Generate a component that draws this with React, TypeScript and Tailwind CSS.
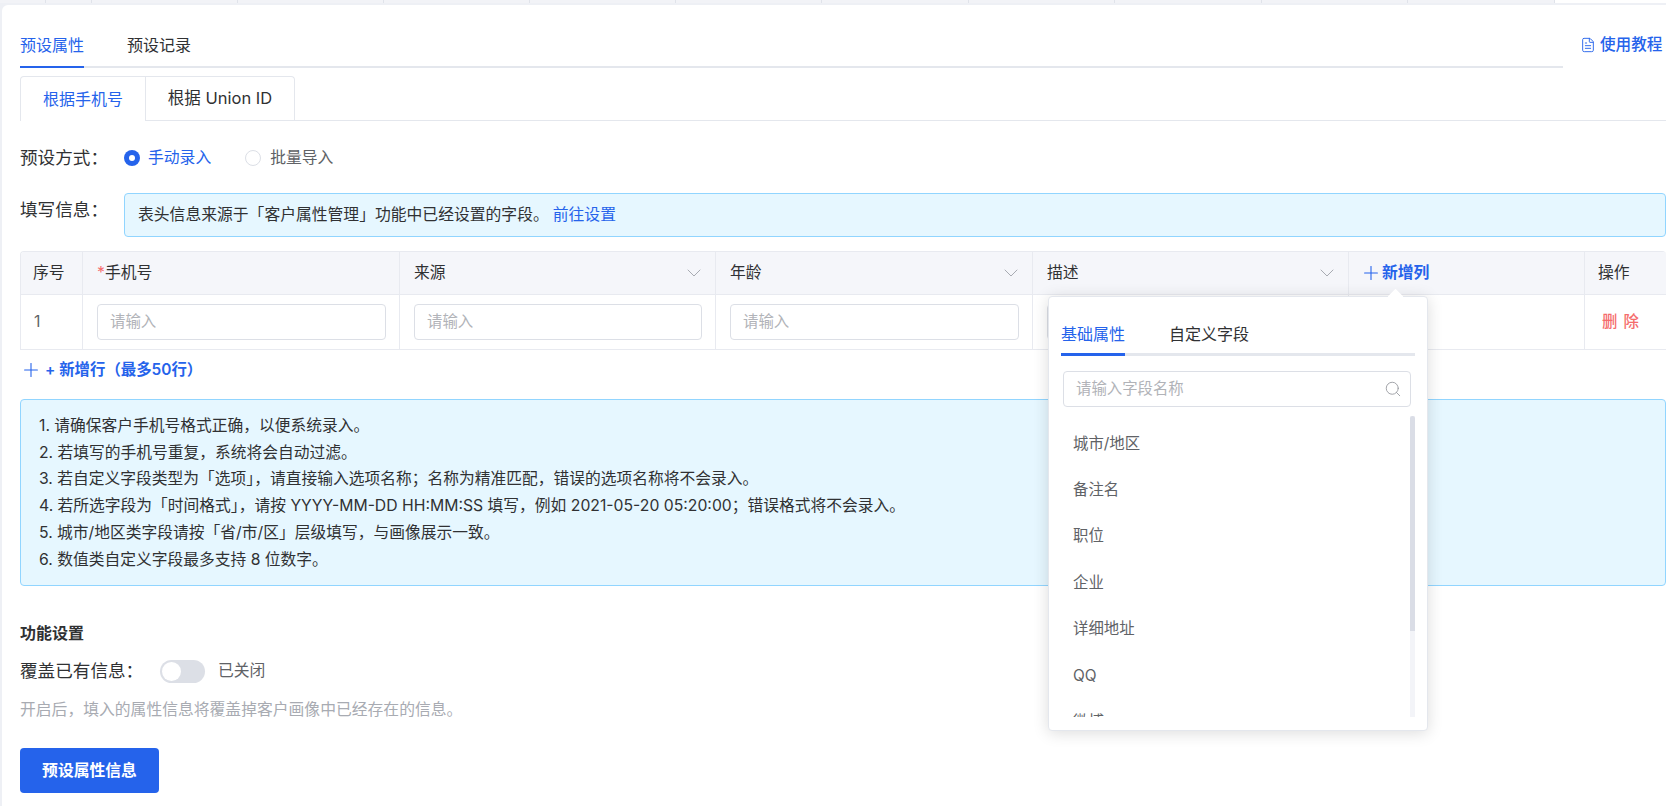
import { ChevronDown, FileText, Plus, Search } from "lucide-react"

const stripWidths = [46, 46, 146, 146, 146, 146, 146, 147, 146, 147, 146, 147]
const columns = ["来源", "年龄", "描述"]
const fields = ["城市/地区", "备注名", "职位", "企业", "详细地址", "QQ", "微博"]
const tips = [
  "1. 请确保客户手机号格式正确，以便系统录入。",
  "2. 若填写的手机号重复，系统将会自动过滤。",
  "3. 若自定义字段类型为「选项」，请直接输入选项名称；名称为精准匹配，错误的选项名称将不会录入。",
  "4. 若所选字段为「时间格式」，请按 YYYY-MM-DD HH:MM:SS 填写，例如 2021-05-20 05:20:00；错误格式将不会录入。",
  "5. 城市/地区类字段请按「省/市/区」层级填写，与画像展示一致。",
  "6. 数值类自定义字段最多支持 8 位数字。",
]

const FieldInput = ({ placeholder = "请输入" }: { placeholder?: string }) => (
  <div className="ml-[14px] mr-[13px] flex h-[36px] flex-1 items-center rounded-[4px] border border-[#dcdfe6] bg-white px-3 text-[15.4px] text-[#b1b3b8]">
    {placeholder}
  </div>
)

const FieldPopover = () => (
  <div className="absolute left-[1028px] top-[45px] z-10 h-[435px] w-[380px] rounded-[4px] border border-[#e4e7ed] bg-white px-3 shadow-[0_2px_16px_rgba(0,0,0,0.14)]">
    <div className="absolute left-[341px] top-[-6px] h-[11px] w-[11px] rotate-45 bg-white" />
    <div className="mt-[25px] flex h-[31px] gap-[44px] text-base text-[#303133]">
      <span className="text-[#2563eb]">基础属性</span>
      <span>自定义字段</span>
    </div>
    <div className="h-[3px] w-[354px] bg-[#e4e7ed]">
      <div className="h-[3px] w-[64px] bg-[#2563eb]" />
    </div>
    <div className="ml-[2px] mt-[15px] flex h-[36px] w-[348px] items-center justify-between rounded-[4px] border border-[#dcdfe6] pl-3 pr-[8px] text-[15.4px] text-[#b1b3b8]">
      请输入字段名称
      <Search size={18} strokeWidth={1.1} className="text-[#909399]" />
    </div>
    <div className="relative mt-[9px] h-[301px] overflow-hidden">
      <div className="pl-[12px] pt-[4px] text-[15.4px] text-[#606266]">
        {fields.map((item) => (
          <div key={item} className="flex h-[46.4px] items-center">
            {item}
          </div>
        ))}
      </div>
      <div className="absolute right-0 top-0 h-full w-[5px] bg-[#f3f4f8]">
        <div className="h-[215px] rounded-t-[3px] bg-[#dadde6]" />
      </div>
    </div>
  </div>
)

const PresetTable = () => (
  <div className="relative mt-[14px]">
    <div className="grid grid-cols-[62px_317px_316px_317px_316px_236px_82px] overflow-hidden rounded-t-[4px] border-y border-l border-[#e8eaf0] text-[15.8px]">
      <div className="flex h-[43px] items-center border-r border-b border-[#e8eaf0] bg-[#f5f6fa] pl-[12px] text-[#303133]">序号</div>
      <div className="flex h-[43px] items-center border-r border-b border-[#e8eaf0] bg-[#f5f6fa] pl-[14px] text-[#303133]">
        <span className="text-[#f56c6c]">*</span>手机号
      </div>
      {columns.map((col) => (
        <div key={col} className="flex h-[43px] items-center justify-between border-r border-b border-[#e8eaf0] bg-[#f5f6fa] pl-[14px] pr-[9px] text-[#303133]">
          {col}
          <ChevronDown size={24} strokeWidth={1} className="text-[#a8abb2]" />
        </div>
      ))}
      <div className="flex h-[43px] items-center border-r border-b border-[#e8eaf0] bg-[#f5f6fa] pl-[11px] font-semibold text-[#2563eb]">
        <Plus size={22} strokeWidth={1.2} />
        新增列
      </div>
      <div className="flex h-[43px] items-center border-b border-[#e8eaf0] bg-[#f5f6fa] pl-[13px] text-[#303133]">操作</div>

      <div className="flex h-[54px] items-center border-r border-[#e8eaf0] pl-[13px] text-[#606266]">1</div>
      <div className="flex h-[54px] items-center border-r border-[#e8eaf0]"><FieldInput /></div>
      <div className="flex h-[54px] items-center border-r border-[#e8eaf0]"><FieldInput /></div>
      <div className="flex h-[54px] items-center border-r border-[#e8eaf0]"><FieldInput /></div>
      <div className="flex h-[54px] items-center border-r border-[#e8eaf0]"><FieldInput placeholder="" /></div>
      <div className="h-[54px] border-r border-[#e8eaf0]" />
      <div className="flex h-[54px] items-center pl-[17px] text-[15.4px] font-medium tracking-[1px] text-[#f56c6c]">删 除</div>
    </div>
    <FieldPopover />
  </div>
)

export default function App() {
  return (
    <div className="h-[806px] w-[1666px] overflow-hidden bg-[#eef0f5] font-['Inter','Noto_Sans_CJK_SC',sans-serif] text-[#303133]">
      <div className="flex h-[3px]">
        {stripWidths.map((w, i) => (
          <div key={i} className="h-full border-r border-[#e0e3ea] bg-[#f2f3f7]" style={{ width: w }} />
        ))}
        <div className="h-full flex-1 bg-white" />
      </div>

      <div className="ml-[2px] mt-[2px] h-[801px] rounded-tl-[6px] bg-white pl-[18px]">
        <div className="flex h-[63px]">
          <div className="flex h-[63px] w-[1543px] items-end border-b-2 border-[#e4e7ed]">
            <div className="-mb-[2px] flex h-[35px] w-[64px] justify-center border-b-2 border-[#2563eb] text-base text-[#2563eb]">
              预设属性
            </div>
            <div className="ml-[43px] h-[33px] text-base">预设记录</div>
          </div>
          <div className="ml-[17px] mt-[29px] flex h-[22px] items-center gap-[4px] whitespace-nowrap text-[15.6px] font-medium text-[#2563eb]">
            <FileText size={16} strokeWidth={1.4} />
            使用教程
          </div>
        </div>

        <div className="mt-[8px] flex h-[45px] border-b border-[#e4e7ed] text-base">
          <div className="flex h-[45px] w-[126px] items-center justify-center rounded-tl-[4px] border-x border-t border-[#e4e7ed] bg-white text-[#2563eb]">
            根据手机号
          </div>
          <div className="flex h-[44px] w-[149px] items-center justify-center rounded-tr-[4px] border-r border-t border-[#e4e7ed] text-[16.5px]">
            根据 Union ID
          </div>
        </div>

        <div className="mt-[25px] flex h-[24px] items-center text-[15.8px]">
          <span className="w-[104px] text-[17.6px]">预设方式：</span>
          <span className="flex h-[16px] w-[16px] items-center justify-center rounded-full bg-[#2563eb]">
            <span className="h-[6px] w-[6px] rounded-full bg-white" />
          </span>
          <span className="ml-[8px] text-[#2563eb]">手动录入</span>
          <span className="ml-[34px] h-[16px] w-[16px] rounded-full border border-[#dcdfe6]" />
          <span className="ml-[9px] text-[#606266]">批量导入</span>
        </div>

        <div className="mt-[23px] flex">
          <span className="mt-[4px] w-[104px] text-[17.6px]">填写信息：</span>
          <div className="flex h-[44px] flex-1 items-center rounded-[4px] border border-[#91d5ff] bg-[#e6f7ff] pl-[13px] text-[15.8px]">
            表头信息来源于「客户属性管理」功能中已经设置的字段。
            <span className="ml-[4px] text-[#2563eb]">前往设置</span>
          </div>
        </div>

        <PresetTable />

        <div className="mt-[8px] flex h-[24px] items-center gap-[3px] text-[15.4px] font-semibold text-[#2563eb]">
          <Plus size={22} strokeWidth={1.2} />
          + 新增行（最多50行）
        </div>

        <div className="mt-[17px] h-[187px] rounded-[4px] border border-[#91d5ff] bg-[#e6f7ff] pl-[18px] pt-[13px] text-[15.75px] leading-[26.7px]">
          {tips.map((tip) => (
            <div key={tip}>{tip}</div>
          ))}
        </div>

        <div className="mt-[35px] h-[24px] text-base font-semibold leading-[24px]">功能设置</div>
        <div className="mt-[14px] flex h-[24px] items-center">
          <span className="w-[140px] text-[17.6px]">覆盖已有信息：</span>
          <span className="flex h-[23px] w-[45px] items-center rounded-full bg-[#dcdfe6] pl-[2px]">
            <span className="h-[19px] w-[19px] rounded-full bg-white" />
          </span>
          <span className="ml-[13px] text-[15.8px] text-[#606266]">已关闭</span>
        </div>
        <div className="mt-[15px] h-[24px] text-[15.8px] leading-[24px] text-[#a8abb2]">
          开启后，填入的属性信息将覆盖掉客户画像中已经存在的信息。
        </div>
        <button className="mt-[26px] h-[45px] w-[139px] rounded-[4px] bg-[#2563eb] text-[15.8px] font-semibold text-white">
          预设属性信息
        </button>
      </div>
    </div>
  )
}
